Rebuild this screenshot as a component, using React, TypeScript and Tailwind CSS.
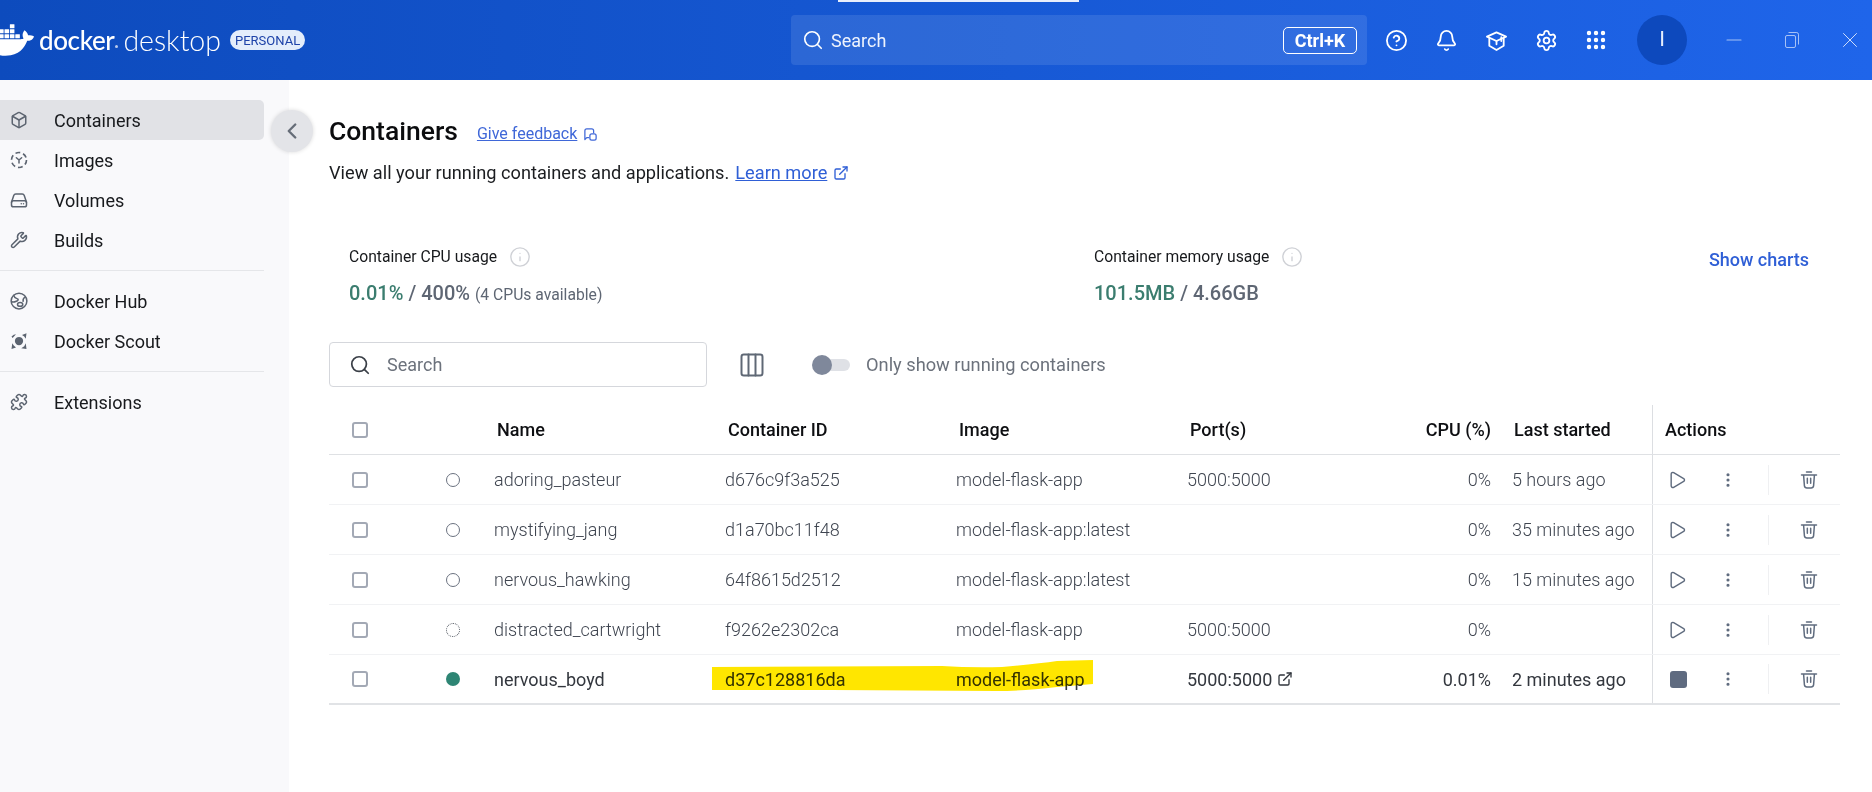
import React from "react";
import { SiDocker } from "react-icons/si";
import {
  Box, Wrench, Puzzle, CircleHelp, Bell, Settings, Grip, Search, ChevronLeft,
  ExternalLink, Columns3, Play, EllipsisVertical, Minus, X, Info,
} from "lucide-react";

const Ico = ({ children, className = "w-[18px] h-[18px]" }: { children: React.ReactNode; className?: string }) => (
  <svg viewBox="0 0 24 24" fill="none" stroke="currentColor" strokeWidth="2" strokeLinecap="round" strokeLinejoin="round" className={className}>
    {children}
  </svg>
);

const ImagesIcon = () => (
  <Ico>
    <circle cx="12" cy="12" r="10" strokeDasharray="6.5 4" strokeLinecap="butt" strokeWidth="2.2" />
    <path d="M8.5 9 12 12l3.5-3M12 12v4" />
  </Ico>
);
const VolumesIcon = () => (
  <Ico>
    <path d="M2 15 5 6a3 3 0 0 1 3-2h8a3 3 0 0 1 3 2l3 9" />
    <rect x="2" y="13" width="20" height="8" rx="2.5" />
    <path d="M15 17h.01M18 17h.01" />
  </Ico>
);
const HubIcon = () => (
  <Ico>
    <circle cx="12" cy="12" r="10.5" />
    <path d="M5 4.5c1 4 3.5 3.5 5.5 5s-5 5-8 3.5M20.5 6.5c-2 1-3.5 3-3 6" />
    <ellipse cx="13.5" cy="16.5" rx="3.5" ry="2.5" />
  </Ico>
);
const ScoutIcon = () => (
  <svg viewBox="0 0 24 24" className="w-[18px] h-[18px]" fill="currentColor">
    <circle cx="12" cy="12" r="5.5" />
    <path d="M2 6 5 3.5 8 3 3.5 8ZM22 1.5 21 9 19 6 16 4ZM2 22.5 3 15 5 18 8 20.5ZM22 22.5 15 21.5 19 19 21 15Z" />
  </svg>
);
const LearnIcon = () => (
  <Ico className="w-[23px] h-[23px]">
    <path d="M2 8 12 3.5 22 8 12 12.5Z" strokeWidth="1.9" />
    <path d="M4.5 10v7.5L12 22l7.5-4.5V10" strokeWidth="1.9" />
    <path d="M12 12.5V16M17 8.5v4" strokeWidth="1.9" />
  </Ico>
);
const FeedbackIcon = () => (
  <Ico className="w-[15px] h-[15px] text-[#3f67d8]">
    <path d="M9 17H6l-3 3V6a3 3 0 0 1 3-3h8a3 3 0 0 1 3 3v3" />
    <rect x="11" y="11" width="10" height="10" rx="3" />
  </Ico>
);
const TrashIcon = () => (
  <Ico className="w-[20px] h-[20px] text-[#5f6b7e]">
    <path d="M3 6h18M9 2.5h6M5.5 6l1 13a3 3 0 0 0 3 2.5h5a3 3 0 0 0 3-2.5l1-13M10 10v6M14 10v6" strokeWidth="1.8" />
  </Ico>
);
const RestoreIcon = () => (
  <svg viewBox="0 0 16 18" fill="none" stroke="currentColor" strokeWidth="1" className="w-[16px] h-[18px]">
    <rect x="1.5" y="4.5" width="10" height="12" rx="1.5" />
    <path d="M4.5 1.5h8a2 2 0 0 1 2 2v10" />
  </svg>
);

const nav1 = [
  { label: "Containers", icon: <Box className="w-[18px] h-[18px]" strokeWidth={2} />, active: true },
  { label: "Images", icon: <ImagesIcon /> },
  { label: "Volumes", icon: <VolumesIcon /> },
  { label: "Builds", icon: <Wrench className="w-[18px] h-[18px]" strokeWidth={2} /> },
];
const nav2 = [
  { label: "Docker Hub", icon: <HubIcon /> },
  { label: "Docker Scout", icon: <ScoutIcon /> },
];
const nav3 = [{ label: "Extensions", icon: <Puzzle className="w-[18px] h-[18px]" strokeWidth={2} /> }];

type NavItem = { label: string; icon: React.ReactNode; active?: boolean };
const NavRow = ({ item }: { item: NavItem }) => (
  <div className={`flex items-center h-10 pl-[10px] gap-[26px] text-[18px] text-[#17191c] rounded-r-[5px] ${item.active ? "bg-[#e1e2e6]" : ""}`}>
    <span className="text-[#5c6470] flex">{item.icon}</span>
    <span>{item.label}</span>
  </div>
);

const rows = [
  { name: "adoring_pasteur", id: "d676c9f3a525", image: "model-flask-app", port: "5000:5000", cpu: "0%", last: "5 hours ago", status: "stopped" },
  { name: "mystifying_jang", id: "d1a70bc11f48", image: "model-flask-app:latest", port: "", cpu: "0%", last: "35 minutes ago", status: "stopped" },
  { name: "nervous_hawking", id: "64f8615d2512", image: "model-flask-app:latest", port: "", cpu: "0%", last: "15 minutes ago", status: "stopped" },
  { name: "distracted_cartwright", id: "f9262e2302ca", image: "model-flask-app", port: "5000:5000", cpu: "0%", last: "", status: "created" },
  { name: "nervous_boyd", id: "d37c128816da", image: "model-flask-app", port: "5000:5000", cpu: "0.01%", last: "2 minutes ago", status: "running" },
];

const gridCols = "grid grid-cols-[165px_231px_231px_231px_200px_104px_21px_140px_188px]";

const Checkbox = () => (
  <span className="block w-[16px] h-[16px] rounded-[3px] border-2 border-[#a3a9b5] bg-white" />
);

const Status = ({ s }: { s: string }) => {
  if (s === "running") return <span className="block w-[14px] h-[14px] rounded-full bg-[#2e8574]" />;
  if (s === "created") return <span className="block w-[14px] h-[14px] rounded-full border border-dotted border-[#4f555e]" />;
  return <span className="block w-[14px] h-[14px] rounded-full border border-[#6b7280]" />;
};

const InfoDot = () => <Info className="w-[22px] h-[22px] text-[#cfd1d6]" strokeWidth={1.5} />;

export default function App() {
  return (
    <div className="w-full h-[792px] overflow-hidden bg-white flex flex-col [font-family:Roboto,sans-serif]">
      <header className="relative h-20 shrink-0 flex items-center bg-gradient-to-r from-[#0d4bbd] to-[#1f65ea] text-white overflow-hidden">
        <div className="absolute top-0 left-[838px] w-[241px] h-[2px] bg-[#e8eefb]" />
        <div className="w-[791px] shrink-0 flex items-center">
          <SiDocker className="w-[44px] h-[44px] -ml-[10px] shrink-0" />
          <span className="ml-[5px] text-[26px] leading-none tracking-[-0.4px] font-medium [font-family:Lato,sans-serif]">docker</span>
          <span className="w-[3px] h-[3px] mt-[12px] ml-[1px] rounded-full bg-white/70" />
          <span className="ml-[5px] text-[28.5px] leading-none font-light [font-family:Lato,sans-serif]">desktop</span>
          <span className="ml-[9px] h-5 px-[5px] flex items-center rounded-full bg-[#e3edfb] text-[#1d42a8] text-[13px] leading-none">PERSONAL</span>
        </div>
        <div className="w-[576px] h-[50px] shrink-0 rounded-[4px] bg-white/10 flex items-center pl-[11px] pr-[10px]">
          <Search className="w-[22px] h-[22px]" strokeWidth={1.8} />
          <span className="ml-[7px] text-[18px] text-[#eef3fd]">Search</span>
          <span className="ml-auto w-[74px] h-[27px] flex items-center justify-center rounded-[5px] border border-white text-[18px] font-bold">Ctrl+K</span>
        </div>
        <div className="ml-[4px] flex items-center">
          <span className="w-[50px] flex justify-center"><CircleHelp className="w-[23px] h-[23px]" strokeWidth={1.9} /></span>
          <span className="w-[50px] flex justify-center"><Bell className="w-[23px] h-[23px]" strokeWidth={1.9} /></span>
          <span className="w-[50px] flex justify-center"><LearnIcon /></span>
          <span className="w-[50px] flex justify-center"><Settings className="w-[23px] h-[23px]" strokeWidth={1.9} /></span>
          <span className="w-[50px] flex justify-center"><Grip className="w-[24px] h-[24px]" strokeWidth={2.4} /></span>
        </div>
        <div className="ml-[16px] w-[50px] h-[50px] rounded-full bg-[#0d49bd] flex items-center justify-center text-[21px] text-[#e6eefc]">I</div>
        <div className="ml-[39px] flex items-center gap-[42px] text-white/60">
          <Minus className="w-[24px] h-[24px] -mx-[4px]" strokeWidth={1.1} />
          <RestoreIcon />
          <X className="w-[26px] h-[26px] -mx-[5px] text-white/80" strokeWidth={0.9} />
        </div>
      </header>

      <div className="flex-1 flex min-h-0">
        <aside className="w-[289px] shrink-0 bg-[#f9f9fb] pt-5 pr-[25px]">
          {nav1.map((n) => <NavRow key={n.label} item={n} />)}
          <div className="my-[10px] border-t border-[#e5e6e9]" />
          {nav2.map((n) => <NavRow key={n.label} item={n} />)}
          <div className="my-[10px] border-t border-[#e5e6e9]" />
          {nav3.map((n) => <NavRow key={n.label} item={n} />)}
        </aside>

        <main className="relative flex-1 pl-10 pr-8 pt-[35px] min-w-0">
          <button className="absolute -left-[18px] top-[30px] w-[42px] h-[42px] rounded-full bg-[#e3e4e8] shadow-[0_0_4px_rgba(0,0,0,0.15)] flex items-center justify-center text-[#666d78]">
            <ChevronLeft className="w-[26px] h-[26px]" strokeWidth={2.2} />
          </button>

          <div className="flex items-center h-8">
            <h1 className="text-[26.5px] font-medium text-[#0b0c0e] leading-8">Containers</h1>
            <a className="ml-[19px] mt-[5px] text-[16px] text-[#3f67d8] underline">Give feedback</a>
            <span className="ml-[6px] mt-[7px]"><FeedbackIcon /></span>
          </div>
          <div className="mt-[14px] h-6 flex items-center text-[18.2px] text-[#1b1d20]">
            <span>View all your running containers and applications.</span>
            <a className="ml-[6px] text-[#2f5fd6] underline">Learn more</a>
            <ExternalLink className="ml-[6px] w-[16px] h-[16px] text-[#2f5fd6]" strokeWidth={2} />
          </div>

          <div className="mt-[62px] flex pl-5">
            <div className="w-[745px] shrink-0">
              <div className="h-5 flex items-center text-[15.7px] text-[#17191c]">Container CPU usage<span className="ml-[12px]"><InfoDot /></span></div>
              <div className="mt-[11px] h-6 flex items-baseline text-[20px] font-medium text-[#5e6673]">
                <span className="text-[#3b7d6f]">0.01%</span>
                <span className="ml-[5px]">/ 400%</span>
                <span className="ml-[5px] text-[15.7px] font-normal">(4 CPUs available)</span>
              </div>
            </div>
            <div>
              <div className="h-5 flex items-center text-[15.7px] text-[#17191c]">Container memory usage<span className="ml-[12px]"><InfoDot /></span></div>
              <div className="mt-[11px] h-6 flex items-baseline text-[20px] font-medium text-[#5e6673]">
                <span className="text-[#3b7d6f]">101.5MB</span>
                <span className="ml-[5px]">/ 4.66GB</span>
              </div>
            </div>
            <a className="ml-auto mr-[31px] mt-[3px] text-[18px] font-medium text-[#2f5fd6] h-5 leading-5">Show charts</a>
          </div>

          <div className="mt-[40px] flex items-center h-[45px]">
            <div className="w-[378px] h-[45px] rounded-[4px] border border-[#d5d7dc] flex items-center pl-[19px]">
              <Search className="w-[22px] h-[22px] text-[#3a3f47]" strokeWidth={1.9} />
              <span className="ml-[16px] text-[18px] text-[#6c727c]">Search</span>
            </div>
            <Columns3 className="ml-[31px] w-[28px] h-[28px] text-[#5f6875]" strokeWidth={1.7} />
            <div className="relative ml-[46px] w-[38px] h-[22px]">
              <span className="absolute left-[4px] top-[5px] w-[34px] h-[12px] rounded-full bg-[#dfe1e6]" />
              <span className="absolute left-0 top-[1px] w-[20px] h-[20px] rounded-full bg-[#7f889b]" />
            </div>
            <span className="ml-[16px] text-[18.25px] text-[#6c727c]">Only show running containers</span>
          </div>

          <div className="relative mt-[18px]">
            <div className={`${gridCols} h-[50px] border-b border-[#dfe1e4] text-[18px] font-medium text-[#0e0f12] items-center`}>
              <div className="pl-[23px] flex items-center"><Checkbox /></div>
              <div className="pl-[3px]">Name</div>
              <div className="pl-[3px]">Container ID</div>
              <div className="pl-[3px]">Image</div>
              <div className="pl-[3px]">Port(s)</div>
              <div className="text-right whitespace-nowrap">CPU (%)</div>
              <div />
              <div className="pl-[2px] whitespace-nowrap">Last started</div>
              <div className="h-full border-l border-[#dcdee2] flex items-center pl-[12px]">Actions</div>
            </div>
            {rows.map((r, i) => {
              const running = r.status === "running";
              return (
                <div
                  key={r.name}
                  className={`${gridCols} h-[50px] items-center text-[18px] ${i === rows.length - 1 ? "border-b-2 border-[#e1e3e6]" : "border-b border-[#f1f2f4]"} ${running ? "text-[#33373e]" : "font-light text-[#3f4550]"}`}
                >
                  <div className="flex items-center pl-[23px] pr-[34px] justify-between">
                    <Checkbox />
                    <Status s={r.status} />
                  </div>
                  <div className="whitespace-nowrap">{r.name}</div>
                  <div>{r.id}</div>
                  <div className="whitespace-nowrap">{r.image}</div>
                  <div className="flex items-center gap-[5px]">
                    {r.port}
                    {running && <ExternalLink className="w-[16px] h-[16px] text-[#30353c]" strokeWidth={2} />}
                  </div>
                  <div className="text-right">{r.cpu}</div>
                  <div />
                  <div className="whitespace-nowrap">{r.last}</div>
                  <div className="h-full border-l border-[#dcdee2] flex items-center">
                    <span className="w-[34px] flex justify-end">
                      {running ? (
                        <span className="block w-[17px] h-[17px] rounded-[3px] bg-[#5f6b80]" />
                      ) : (
                        <Play className="w-[20px] h-[20px] text-[#5f6b7e]" strokeWidth={1.7} />
                      )}
                    </span>
                    <span className="w-[50px] flex justify-end"><EllipsisVertical className="w-[18px] h-[18px] text-[#5f6b7e]" strokeWidth={2.2} /></span>
                    <span className="ml-[31px] h-[30px] border-l border-[#eff0f2]" />
                    <span className="ml-[30px] flex"><TrashIcon /></span>
                  </div>
                </div>
              );
            })}
            <svg viewBox="0 0 382 34" className="absolute left-[383px] top-[255px] w-[382px] h-[34px] mix-blend-multiply pointer-events-none">
              <path
                d="M0 7 L230 6 Q260 8 290 7 Q325 4 345 1 L381 0 L381 24 L345 27 Q310 31 285 31 L120 30 L0 30 Z"
                fill="#ffe600"
              />
            </svg>
          </div>
        </main>
      </div>
    </div>
  );
}
